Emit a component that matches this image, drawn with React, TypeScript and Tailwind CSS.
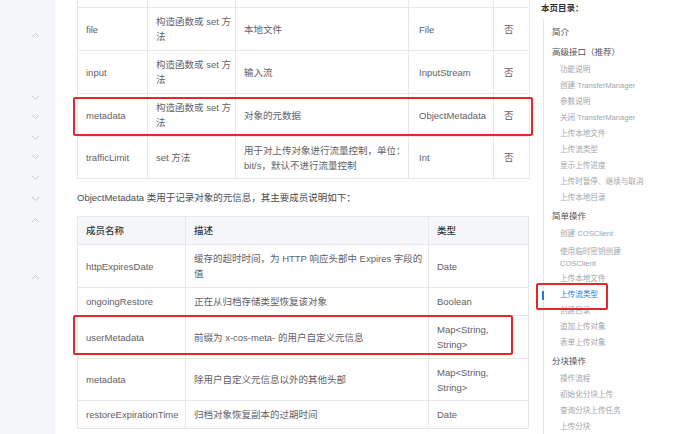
import React from 'react';

const Chevron = ({ up, className }: { up?: boolean; className: string }) => (
  <svg width="9" height="6" viewBox="0 0 9 6" className={className}>
    <polyline
      points={up ? '1,5 4.5,1.5 8,5' : '1,1 4.5,4.5 8,1'}
      fill="none"
      stroke="#c3c7ce"
      strokeWidth="1"
    />
  </svg>
);

const cell = 'border border-[#e6e8eb] px-[8px] align-middle leading-[15px] whitespace-nowrap';

const paramRows = [
  { name: '', how: '', desc: '', type: '', req: '' },
  { name: 'file', how: <>构造函数或 set 方<br />法</>, desc: '本地文件', type: 'File', req: '否' },
  { name: 'input', how: <>构造函数或 set 方<br />法</>, desc: '输入流', type: 'InputStream', req: '否' },
  { name: 'metadata', how: <>构造函数或 set 方<br />法</>, desc: '对象的元数据', type: 'ObjectMetadata', req: '否' },
  {
    name: 'trafficLimit',
    how: 'set 方法',
    desc: <>用于对上传对象进行流量控制，单位：<br />bit/s，默认不进行流量控制</>,
    type: 'Int',
    req: '否',
  },
];

const memberRows = [
  { name: 'httpExpiresDate', desc: <>缓存的超时时间，为 HTTP 响应头部中 Expires 字段的<br />值</>, type: 'Date', h: 'h-[43px]' },
  { name: 'ongoingRestore', desc: '正在从归档存储类型恢复该对象', type: 'Boolean', h: 'h-[28px]' },
  { name: 'userMetadata', desc: '前缀为 x-cos-meta- 的用户自定义元信息', type: <>Map&lt;String,<br />String&gt;</>, h: 'h-[43px]' },
  { name: 'metadata', desc: '除用户自定义元信息以外的其他头部', type: <>Map&lt;String,<br />String&gt;</>, h: 'h-[42px]' },
  { name: 'restoreExpirationTime', desc: '归档对象恢复副本的过期时间', type: 'Date', h: 'h-[28px]' },
];

type TocItem = { label: React.ReactNode; level: 1 | 2; active?: boolean; tall?: boolean };

const toc: TocItem[] = [
  { label: '简介', level: 1 },
  { label: '高级接口（推荐）', level: 1 },
  { label: '功能说明', level: 2 },
  { label: '创建 TransferManager', level: 2 },
  { label: '参数说明', level: 2 },
  { label: '关闭 TransferManager', level: 2 },
  { label: '上传本地文件', level: 2 },
  { label: '上传流类型', level: 2 },
  { label: '显示上传进度', level: 2 },
  { label: '上传时暂停、继续与取消', level: 2 },
  { label: '上传本地目录', level: 2 },
  { label: '简单操作', level: 1 },
  { label: '创建 COSClient', level: 2 },
  { label: <>使用临时密钥创建<br />COSClient</>, level: 2, tall: true },
  { label: '上传本地文件', level: 2 },
  { label: '上传流类型', level: 2, active: true },
  { label: '创建目录', level: 2 },
  { label: '追加上传对象', level: 2 },
  { label: '表单上传对象', level: 2 },
  { label: '分块操作', level: 1 },
  { label: '操作流程', level: 2 },
  { label: '初始化分块上传', level: 2 },
  { label: '查询分块上传任务', level: 2 },
  { label: '上传分块', level: 2 },
];

export default function App() {
  return (
    <div className="relative flex w-[695px] h-[434px] overflow-hidden bg-white font-['Liberation_Sans','Noto_Sans_CJK_SC',sans-serif] text-[#5f6166]">
      {/* left rail */}
      <div className="w-[55px] shrink-0 bg-[#f4f6f9] flex flex-col items-center pl-[15px]">
        <Chevron up className="mt-[32px]" />
        <Chevron className="mt-[57px]" />
        <Chevron className="mt-[13px]" />
        <Chevron className="mt-[15px]" />
        <Chevron className="mt-[13px]" />
        <Chevron className="mt-[15px]" />
        <Chevron className="mt-[15px]" />
        <Chevron up className="mt-[15px]" />
        <Chevron up className="mt-[51px]" />
      </div>

      {/* article */}
      <div className="w-[475px] shrink-0 pl-[22px] -mt-[36px] text-[9.5px]">
        <table className="table-fixed border-collapse w-[452px]">
          <colgroup>
            <col className="w-[70px]" />
            <col className="w-[88px]" />
            <col className="w-[173px]" />
            <col className="w-[85px]" />
            <col className="w-[36px]" />
          </colgroup>
          <tbody>
            {paramRows.map((r, i) => (
              <tr key={i} className={r.name === 'trafficLimit' ? 'h-[42px]' : 'h-[43px]'}>
                <td className={cell}>{r.name}</td>
                <td className={cell}>{r.how}</td>
                <td className={cell}>{r.desc}</td>
                <td className={`${cell} px-[10px]`}>{r.type}</td>
                <td className={`${cell} px-[10px]`}>{r.req}</td>
              </tr>
            ))}
          </tbody>
        </table>

        <p className="mt-[12px] mb-[11px] leading-[14px] text-[#4a4c50] whitespace-nowrap">
          ObjectMetadata 类用于记录对象的元信息，其主要成员说明如下：
        </p>

        <table className="table-fixed border-collapse w-[451px]">
          <colgroup>
            <col className="w-[108px]" />
            <col className="w-[243px]" />
            <col className="w-[100px]" />
          </colgroup>
          <thead>
            <tr className="h-[28px] bg-[#f5f7fa]">
              <th className={`${cell} text-left font-medium text-[#33353a]`}>成员名称</th>
              <th className={`${cell} text-left font-medium text-[#33353a]`}>描述</th>
              <th className={`${cell} text-left font-medium text-[#33353a]`}>类型</th>
            </tr>
          </thead>
          <tbody>
            {memberRows.map((r) => (
              <tr key={r.name} className={r.h}>
                <td className={cell}>{r.name}</td>
                <td className={cell}>{r.desc}</td>
                <td className={cell}>{r.type}</td>
              </tr>
            ))}
          </tbody>
        </table>
      </div>

      {/* page toc */}
      <div className="flex-1 pl-[11px] pt-[1px]">
        <div className="h-[14px] leading-[14px] text-[8.5px] font-bold text-[#2f3135]">本页目录：</div>
        <ul className="ml-[2px] mt-[4px] border-l border-[#e4e6ea] h-[420px] pt-[3px]">
          {toc.map((t, i) =>
            t.level === 1 ? (
              <li key={i} className="h-[20px] leading-[20px] pl-[8px] text-[8.5px] text-[#4f5156]">
                {t.label}
              </li>
            ) : (
              <li
                key={i}
                className={`relative pl-[16px] text-[7.6px] ${
                  t.tall ? 'h-[29px] pt-[4px] leading-[12px]' : 'h-[16px] leading-[16px]'
                } ${t.active ? 'text-[#1f7ae0]' : 'text-[#a2a5ab]'}`}
              >
                {t.active && <span className="absolute -left-[2px] top-[4px] h-[9px] w-[2px] bg-[#1f7ae0]" />}
                {t.label}
              </li>
            ),
          )}
        </ul>
      </div>

      {/* highlight annotations */}
      <div className="absolute left-[73px] top-[97px] w-[460px] h-[39px] border-2 border-[#e5262c] rounded-[2px]" />
      <div className="absolute left-[73px] top-[315px] w-[440px] h-[40px] border-2 border-[#e5262c] rounded-[2px]" />
      <div className="absolute left-[536px] top-[283px] w-[72px] h-[27px] border-2 border-[#e5262c] rounded-[2px]" />
    </div>
  );
}
